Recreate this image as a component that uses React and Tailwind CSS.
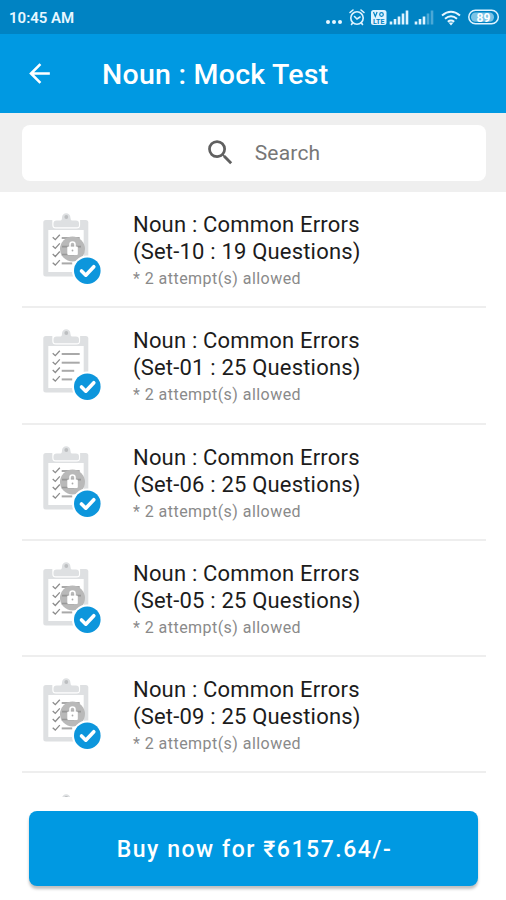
import { MdArrowBack, MdSearch } from 'react-icons/md'

const TESTS = [
  { set: '10', questions: 19, locked: true },
  { set: '01', questions: 25, locked: false },
  { set: '06', questions: 25, locked: true },
  { set: '05', questions: 25, locked: true },
  { set: '09', questions: 25, locked: true },
]

const LINES = [
  { y: 25, width: 18 },
  { y: 33.7, width: 18 },
  { y: 41.8, width: 12.5 },
  { y: 50.4, width: 10.5 },
]

function ClipboardIcon({ locked }) {
  return (
    <svg className="w-[62px] h-[74px] shrink-0" viewBox="0 0 62 74" fill="none">
      {/* Board */}
      <rect x="1.300" y="7" width="45" height="56.500" rx="2.500" fill="#dee0e2" />
      <path d="M6.300 17h35.400v42H6.300z" fill="#fff" />
      <path d="M10.300 7h27.800v5q0 3.500-3.500 3.500H13.800q-3.500 0-3.500-3.500z" fill="#fff" />
      <path d="M13 14.200q-1.500 0-1.500-1.700v-2q0-3 3-3h4q1.500 0 1.500-3a4.200 4.200 0 0 1 8.400 0Q28.500 7.500 30 7.500h4q3 0 3 3v2q0 1.700-1.500 1.700z" fill="#dee0e2" />
      <circle cx="24.300" cy="4" r="1.900" fill="#bcbec0" />
      {/* Checklist */}
      {LINES.map((line) => (
        <g key={line.y}>
          <path d={`M10.700 ${line.y - 0.7}l2.600 2.400 4.500-5`} stroke="#8c8c8c" strokeWidth="1.300" />
          <path d={`M19.700 ${line.y}h${line.width}`} stroke="#a9a9a9" strokeWidth="2" />
        </g>
      ))}
      {locked && (
        <g>
          <circle cx="30.500" cy="36" r="12.500" fill="#b9b9b9" />
          <path d="M20 33.700h19M20 41.500h12" stroke="#989898" strokeWidth="1.700" />
          <rect x="25.300" y="33.500" width="10.500" height="8.500" rx="1" fill="#fff" />
          <path d="M28 34v-2.500a2.500 2.500 0 0 1 5 0V34" stroke="#fff" strokeWidth="1.600" />
          <circle cx="30.500" cy="37.500" r="0.900" fill="#aaa" />
        </g>
      )}
      {/* Badge */}
      <circle cx="45.300" cy="57.700" r="15.300" fill="#fff" />
      <circle cx="45.300" cy="57.700" r="13.300" fill="#0d96dc" />
      <path d="M39.500 58l4.300 4.200 8-8.500" stroke="#fff" strokeWidth="3.600" strokeLinecap="round" strokeLinejoin="round" />
    </svg>
  )
}

function StatusIcons() {
  return (
    <svg className="w-[176px] h-[22px]" viewBox="0 0 176 22" fill="none">
      {/* More */}
      <g fill="#e8f7ff">
        <circle cx="4" cy="16" r="2" />
        <circle cx="10" cy="16" r="2" />
        <circle cx="16" cy="16" r="2" />
      </g>
      {/* Alarm */}
      <g stroke="#dff3ff" strokeWidth="1.600" strokeLinecap="round">
        <circle cx="33" cy="12" r="6.200" />
        <path d="M26 6.500l3-2.500M40 6.500l-3-2.500M30.500 10.500l2.500 2.500 3-2M28.500 17l-1 1.500M37.500 17l1 1.500" />
      </g>
      {/* VoLTE */}
      <rect x="47" y="4" width="15.500" height="15" rx="2.500" fill="#dff3ff" />
      <text x="54.700" y="17.500" textAnchor="middle" fontSize="7" fontWeight="700" fill="#0083c3">LTE</text>
      <path d="M49.500 6l1.800 4.500 1.800-4.500" stroke="#0083c3" strokeWidth="1.200" />
      <circle cx="57.500" cy="8.500" r="1.800" stroke="#0083c3" strokeWidth="1.200" />
      {/* Signal bars */}
      <path d="M67 18.500v-3M71 18.500v-5.500M75 18.500V10.500M79 18.500V7.500M83 18.500V4.500" stroke="#dff3ff" strokeWidth="2.600" />
      <path d="M92 18.500v-3M96 18.500v-5.500M100 18.500V10.500" stroke="#dff3ff" strokeWidth="2.600" />
      <path d="M104 18.500V7.500M108 18.500V4.500" stroke="#4ba8d6" strokeWidth="2.600" />
      {/* Wifi */}
      <g stroke="#e8f7ff" strokeWidth="2">
        <path d="M118 9.500q9-7.500 18 0M121 12.700q6-5 12 0M123.800 15.700q3.200-2.500 6.400 0" />
      </g>
      <path d="M124.500 16.500h5l-2.500 3z" fill="#e8f7ff" />
      {/* Battery */}
      <rect x="144.800" y="4.300" width="29.500" height="13.500" rx="6.700" stroke="#dff3ff" strokeWidth="1.500" />
      <rect x="147" y="6.500" width="23" height="9.200" rx="4.500" fill="#7cc4e6" />
      <text x="159.500" y="15.500" textAnchor="middle" fontSize="12" fontWeight="700" fill="#fff">89</text>
    </svg>
  )
}

function TestRow({ test }) {
  return (
    <div className="flex h-[116.300px] shrink-0 border-b-2 border-[#eeeeee]">
      <div className="pl-5 pt-[21px] w-[111px] shrink-0">
        <ClipboardIcon locked={test.locked} />
      </div>
      <div className="pt-[19.100px] whitespace-nowrap">
        <div className="text-[22px] leading-[27px] tracking-[0.190px] text-[#1c1c1c]">
          Noun : Common Errors
          <br />
          (Set-{test.set} : {test.questions} Questions)
        </div>
        <div className="text-base leading-[27px] tracking-[0.450px] text-[#8a8a8a]">
          * 2 attempt(s) allowed
        </div>
      </div>
    </div>
  )
}

export default function App() {
  return (
    <div className="flex flex-col w-[506px] h-[900px] overflow-hidden bg-white font-['Roboto',sans-serif]">
      {/* Status bar */}
      <div className="flex items-center justify-between h-[34px] shrink-0 pl-[9px] pr-1.5 bg-[#0083c3]">
        <span className="text-[15px] font-semibold text-[#e8f7ff] pt-0.5">10:45 AM</span>
        <StatusIcons />
      </div>

      {/* Header */}
      <header className="flex items-center h-[79px] shrink-0 pl-6 bg-[#0099e2] text-white">
        <MdArrowBack className="w-[31px] h-[31px]" />
        <h1 className="ml-[47px] pt-1 text-[28.500px] font-medium tracking-[0.250px] whitespace-nowrap">
          Noun : Mock Test
        </h1>
      </header>

      {/* Search */}
      <div className="h-[79px] shrink-0 pl-[22px] pr-5 pt-3 bg-[#efefef]">
        <div className="flex items-center justify-center gap-[18px] h-14 pl-4 rounded-lg bg-white">
          <MdSearch className="w-[33px] h-[33px] mb-0.5 text-[#606060]" />
          <span className="pt-0.5 text-[21px] tracking-[0.200px] text-[#777]">Search</span>
        </div>
      </div>

      {/* Tests */}
      <div className="flex flex-col h-[605px] shrink-0 ml-[22px] mr-5 overflow-hidden">
        {TESTS.map((test) => (
          <TestRow key={test.set} test={test} />
        ))}
        <div className="pl-5 pt-[21px]">
          <ClipboardIcon locked />
        </div>
      </div>

      <div className="pt-3.5 pl-[29px] pr-7">
        <button className="w-full h-[75px] pt-1 pl-0.5 rounded-lg bg-[#0099e2] text-white text-[23px] font-medium tracking-[1.550px] whitespace-nowrap shadow-[0_3px_3px_rgba(0,0,0,0.25)]">
          Buy now for ₹6157.64/-
        </button>
      </div>
    </div>
  )
}
